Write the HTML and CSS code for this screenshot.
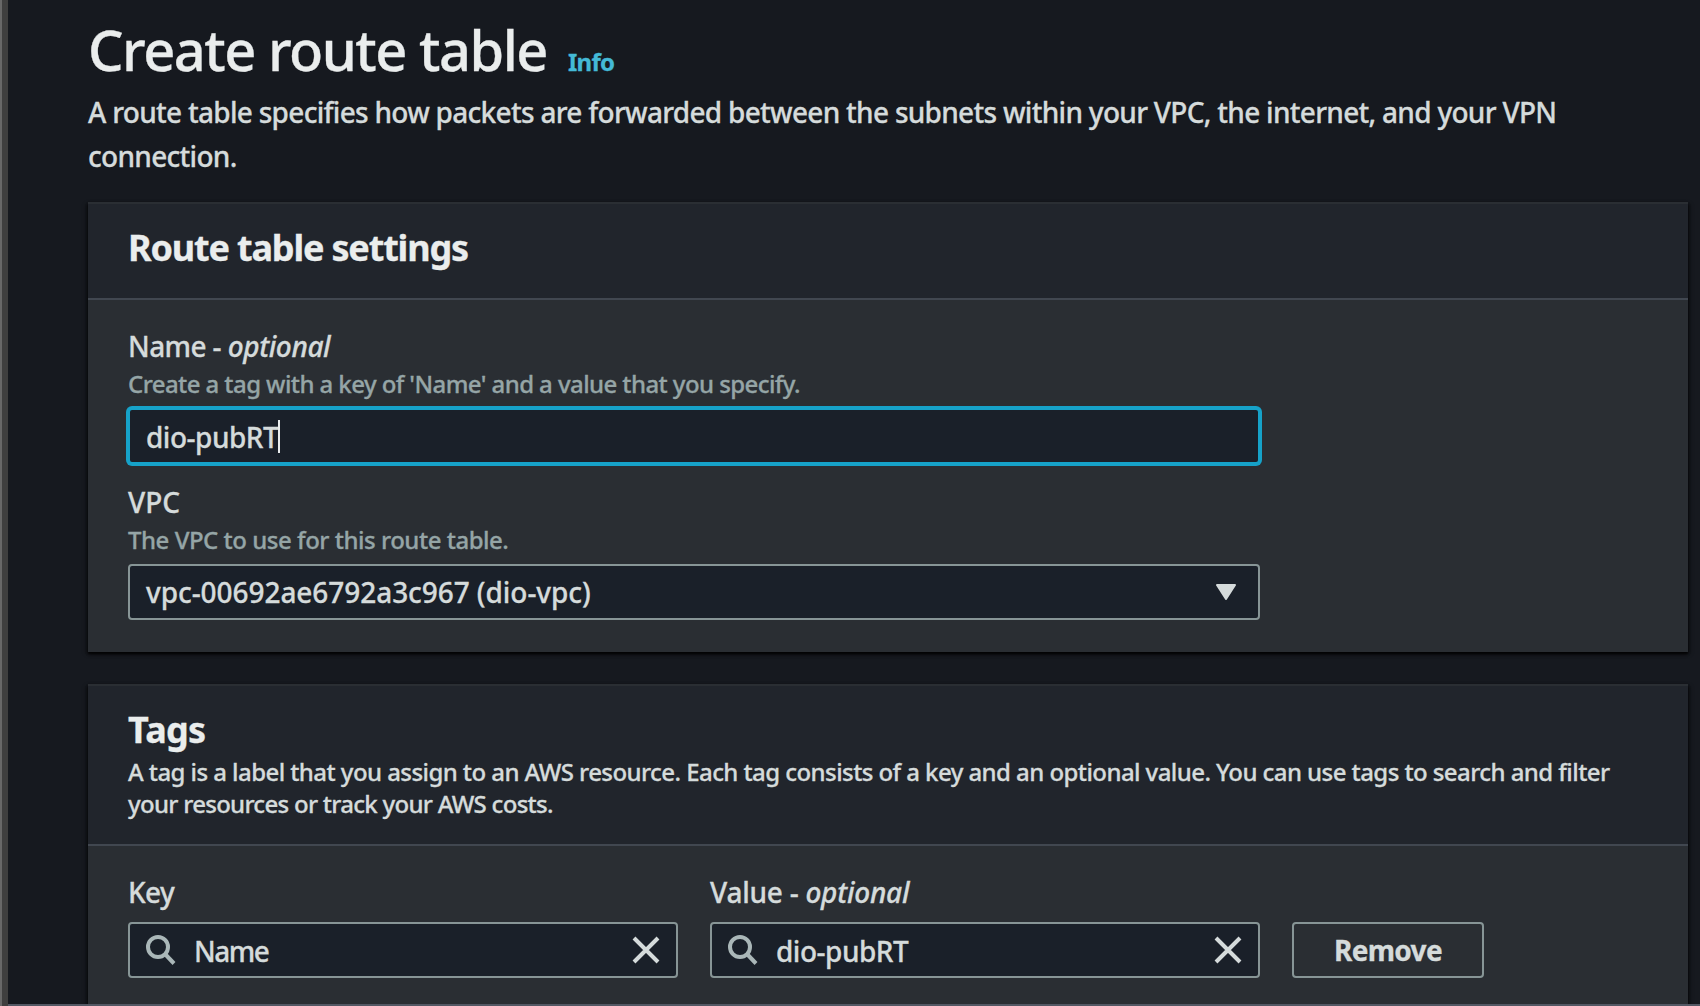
FILE: index.html
```html
<!DOCTYPE html>
<html lang="en">
<head>
<meta charset="utf-8">
<title>Create route table</title>
<link rel="stylesheet" href="styles.css">
</head>
<body>
<div class="window">
  <div class="window-edge"></div>
  <main class="page">
    <header class="page-header">
      <h1 class="page-title">Create route table</h1>
      <a class="info-link">Info</a>
    </header>
    <p class="page-description">A route table specifies how packets are forwarded between the subnets within your VPC, the internet, and your VPN<br>connection.</p>

    <section class="panel">
      <div class="panel-header">
        <h2 class="panel-title title-settings">Route table settings</h2>
      </div>
      <div class="panel-body">
        <div class="field">
          <div class="label label-name">Name - <em>optional</em></div>
          <div class="hint hint-name">Create a tag with a key of 'Name' and a value that you specify.</div>
          <div class="control focused"><span class="text-value">dio-pubRT</span><span class="caret"></span></div>
        </div>
        <div class="field">
          <div class="label label-vpc">VPC</div>
          <div class="hint hint-vpc">The VPC to use for this route table.</div>
          <div class="control select">
            <span class="vpc-value">vpc-00692ae6792a3c967 (dio-vpc)</span>
            <svg class="arrow" width="20" height="16" viewBox="0 0 20 16"><path d="M1 1H19L10 15Z"/></svg>
          </div>
        </div>
      </div>
    </section>

    <section class="panel">
      <div class="panel-header">
        <h2 class="panel-title title-tags">Tags</h2>
        <p class="panel-description"><span class="desc-first">A tag is a label that you assign to an AWS resource. Each tag consists of a key and an optional value. You can use tags to search and filter</span><br>your resources or track your AWS costs.</p>
      </div>
      <div class="panel-body tag-row">
        <div class="tag-field">
          <div class="label label-key">Key</div>
          <div class="control search">
            <svg class="magnifier" width="32" height="32" viewBox="0 0 32 32"><circle cx="13" cy="13" r="10"/><path d="M20 20L29 29.500"/></svg>
            <span class="key-value">Name</span>
            <svg class="clear" width="28" height="28" viewBox="0 0 28 28"><path d="M2 2L26 26M26 2L2 26"/></svg>
          </div>
        </div>
        <div class="tag-field">
          <div class="label label-value">Value - <em>optional</em></div>
          <div class="control search">
            <svg class="magnifier" width="32" height="32" viewBox="0 0 32 32"><circle cx="13" cy="13" r="10"/><path d="M20 20L29 29.500"/></svg>
            <span class="text-value">dio-pubRT</span>
            <svg class="clear" width="28" height="28" viewBox="0 0 28 28"><path d="M2 2L26 26M26 2L2 26"/></svg>
          </div>
        </div>
        <button class="remove-button">Remove</button>
      </div>
    </section>
  </main>
</div>
</body>
</html>
```
FILE: styles.css
```css
* { box-sizing: border-box; }
body {
  margin: 0;
  background: #16191f;
  color: #d5dbdb;
  font-family: "Noto Sans", "Open Sans", sans-serif;
  font-weight: 500;
  font-size: 28px;
  -webkit-text-stroke: 0.3px;
}
h1, h2, p { margin: 0; }
.window {
  display: flex;
  position: relative;
  height: 1006px;
  overflow: hidden;
  white-space: nowrap;
}
/* Bottom frame line runs over the page content */
.window::after {
  content: "";
  position: absolute;
  left: 8px;
  right: 0;
  bottom: 0;
  height: 2px;
  background: #535864;
}
.window-edge {
  flex: none;
  width: 8px;
  background: #3f3f3f;
  border-left: 2px solid #686868;
}
.page { padding: 18px 12px 0 80px; width: 1692px; }
.page-header {
  display: flex;
  align-items: baseline;
  height: 71px;
  gap: 21px;
}
.page-title {
  color: #eaeded;
  font-size: 56px;
  line-height: 62px;
  font-weight: 500;
  letter-spacing: -1.5px;
}
.info-link { color: #44b9d6; font-size: 24px; font-weight: 700; letter-spacing: -0.75px; }
.page-description { line-height: 44px; height: 113px; padding-top: 1px; letter-spacing: -0.71px; }
.panel {
  width: 1600px;
  background: #2a2e33;
  border-top: 2px solid #2a2e33;
  box-shadow: 0 2px 2px rgba(0, 0, 0, .75), 2px 2px 4px rgba(0, 0, 0, .4), -2px 2px 4px rgba(0, 0, 0, .4);
  margin-bottom: 32px;
}
.panel-header {
  background: #21252c;
  border-bottom: 2px solid #414750;
  padding: 22px 40px 28px;
}
.panel-title { color: #eaeded; font-size: 36px; line-height: 44px; font-weight: 700; }
.title-settings { letter-spacing: -1.17px; }
.title-tags { letter-spacing: -0.7px; }
.panel-description {
  font-size: 24px;
  line-height: 32px;
  padding-top: 4px;
  margin-bottom: -4px;
  letter-spacing: -0.72px;
}
.desc-first { letter-spacing: -0.57px; }
.panel-body { padding: 28px 40px 32px; }
.field + .field { margin-top: 20px; }
.field { width: 1132px; }
.label { line-height: 36px; letter-spacing: -0.6px; }
.label em { letter-spacing: -0.4px; }
.label-value { letter-spacing: -0.25px; }
.label-value em { letter-spacing: -0.25px; }
.label-vpc { letter-spacing: 0; }
.hint { color: #95a5a6; font-size: 24px; line-height: 32px; margin: 4px 0 8px; }
.hint-name { letter-spacing: -0.58px; }
.hint-vpc { letter-spacing: -0.48px; }
.control {
  display: flex;
  align-items: center;
  height: 56px;
  padding: 0 16px;
  border: 2px solid #879596;
  border-radius: 4px;
  background: #1a2029;
  line-height: 50px;
}
.text-value, .key-value { padding-top: 1px; letter-spacing: -0.5px; }
.key-value { letter-spacing: -1.5px; }
.vpc-value { letter-spacing: -0.06px; }
.focused { border-color: #16a2c9; box-shadow: 0 0 0 2px #16a2c9; }
.caret { width: 2px; height: 33px; background: #eaeded; }
.select { justify-content: space-between; padding-right: 22px; }
.arrow { fill: #d5dbdb; stroke: #d5dbdb; stroke-width: 2; stroke-linejoin: round; }
.tag-row { display: flex; align-items: flex-end; gap: 32px; }
.tag-field { width: 550px; }
.tag-field .label { margin-bottom: 12px; }
.search { padding: 0 16px 0 15px; }
.magnifier { fill: none; stroke: #aab7b8; stroke-width: 4; margin-right: 17px; }
.clear { margin-left: auto; stroke: #d5dbdb; stroke-width: 4; }
.remove-button {
  width: 192px;
  height: 56px;
  border: 2px solid #879596;
  border-radius: 4px;
  padding: 0;
  background: transparent;
  color: #d5dbdb;
  font: 700 28px/52px "Noto Sans", sans-serif;
  letter-spacing: -0.7px;
}
```
